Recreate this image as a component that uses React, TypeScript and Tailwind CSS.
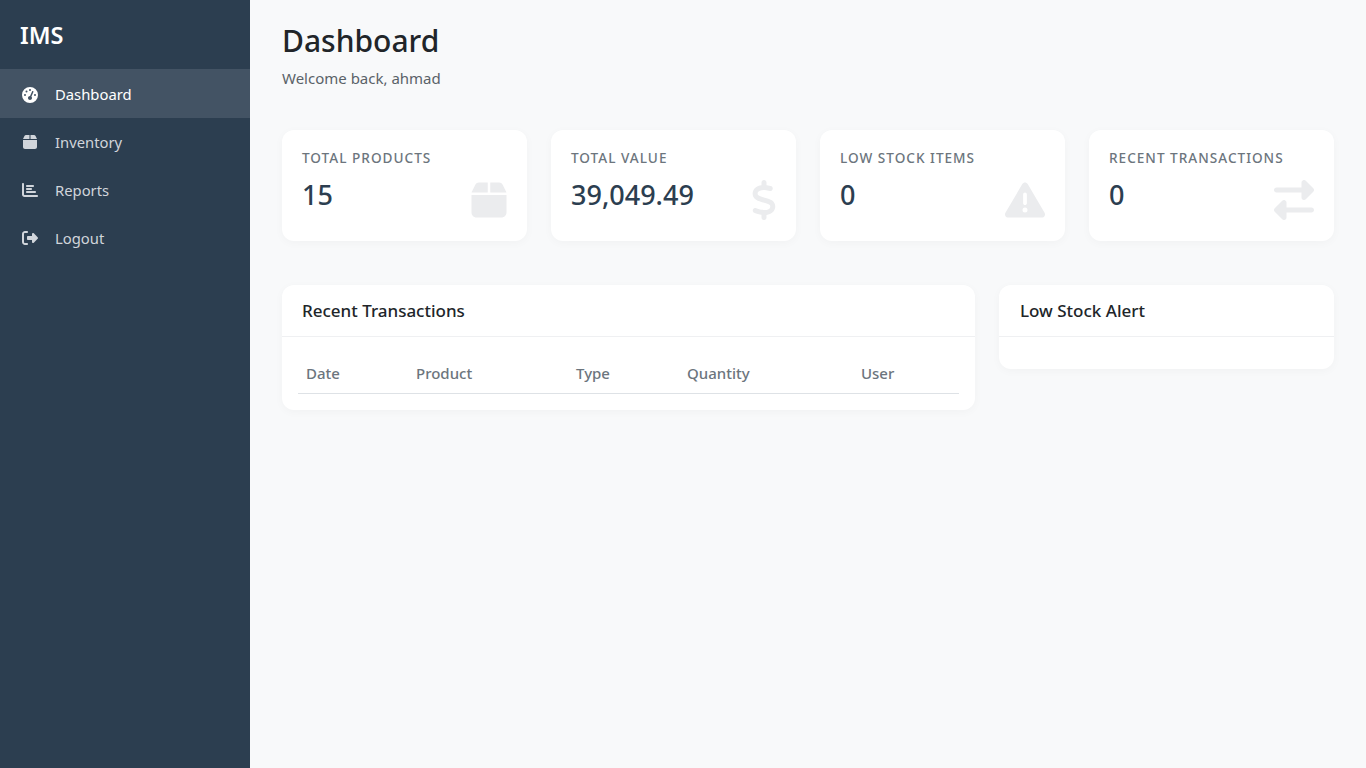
import { FaGaugeHigh, FaBox, FaChartBar, FaRightFromBracket, FaDollarSign, FaTriangleExclamation, FaRightLeft } from "react-icons/fa6";
import type { IconType } from "react-icons";

const navItems: { label: string; icon: IconType; active?: boolean }[] = [
  { label: "Dashboard", icon: FaGaugeHigh, active: true },
  { label: "Inventory", icon: FaBox },
  { label: "Reports", icon: FaChartBar },
  { label: "Logout", icon: FaRightFromBracket },
];

const stats: { label: string; value: string; icon: IconType; iconClass: string }[] = [
  { label: "TOTAL PRODUCTS", value: "15", icon: FaBox, iconClass: "right-[18px]" },
  { label: "TOTAL VALUE", value: "39,049.49", icon: FaDollarSign, iconClass: "right-[12px]" },
  { label: "LOW STOCK ITEMS", value: "0", icon: FaTriangleExclamation, iconClass: "right-5" },
  { label: "RECENT TRANSACTIONS", value: "0", icon: FaRightLeft, iconClass: "right-5" },
];

const columns = [
  { label: "Date", width: "w-[110px]" },
  { label: "Product", width: "w-[160px]" },
  { label: "Type", width: "w-[111px]" },
  { label: "Quantity", width: "w-[174px]" },
  { label: "User", width: "w-[90px]" },
];

export default function App() {
  return (
    <div className="flex min-h-[768px] bg-[#f8f9fa] font-['Noto_Sans','Open_Sans',sans-serif] text-[#212529]">
      <aside className="w-[250px] shrink-0 bg-[#2c3e50]">
        <div className="h-[69px] px-5 pt-[17px] text-[23.5px] leading-[36px] font-semibold text-white">IMS</div>
        <nav>
          {navItems.map((item) => (
            <div
              key={item.label}
              className={`flex items-center px-5 text-[14.8px] ${item.active ? "h-[49px] bg-[#435364] pt-[2px] text-white" : "h-12 text-[#d1d5db]"}`}
            >
              <span className="mr-[15px] flex w-5 shrink-0 justify-center">
                <item.icon className="h-4 w-auto" />
              </span>
              {item.label}
            </div>
          ))}
        </nav>
      </aside>

      <main className="min-w-0 flex-1 px-8 pt-[19px]">
        <h1 className="text-[30px] leading-[44px] font-medium">Dashboard</h1>
        <p className="mt-[4px] text-[15px] leading-[22px] text-[#5a6268]">Welcome back, ahmad</p>

        <div className="mt-[41px] grid grid-cols-4 gap-6">
          {stats.map((stat) => (
            <div key={stat.label} className="relative h-[111px] rounded-[12px] bg-white px-5 pt-[18px] shadow-[0_2px_10px_rgba(0,0,0,0.03)]">
              <div className="text-[13.6px] leading-5 font-medium tracking-[1px] text-[#6c757d]">{stat.label}</div>
              <div className="mt-[7px] text-[27px] leading-[40px] font-medium text-[#2c3e50]">{stat.value}</div>
              <stat.icon className={`absolute bottom-[21px] h-10 w-auto text-[#ebecee] ${stat.iconClass}`} />
            </div>
          ))}
        </div>

        <div className="mt-11 grid grid-cols-[693fr_335fr] items-start gap-6">
          <section className="min-w-0 rounded-[12px] bg-white shadow-[0_2px_10px_rgba(0,0,0,0.03)]">
            <h2 className="border-b border-[#eff0f2] px-5 py-[13px] text-[17px] leading-[25px] font-medium text-[#212529]">Recent Transactions</h2>
            <div className="p-4">
              <div className="flex border-b border-[#dee2e6] px-2 py-2 text-[15px] leading-[24px] font-medium text-[#6c757d]">
                {columns.map((col) => (
                  <div key={col.label} className={col.width}>{col.label}</div>
                ))}
              </div>
            </div>
          </section>
          <section className="min-w-0 rounded-[12px] bg-white shadow-[0_2px_10px_rgba(0,0,0,0.03)]">
            <h2 className="border-b border-[#eff0f2] pr-5 pl-[21px] py-[13px] text-[17px] leading-[25px] font-medium text-[#212529]">Low Stock Alert</h2>
            <div className="h-8" />
          </section>
        </div>
      </main>
    </div>
  );
}
